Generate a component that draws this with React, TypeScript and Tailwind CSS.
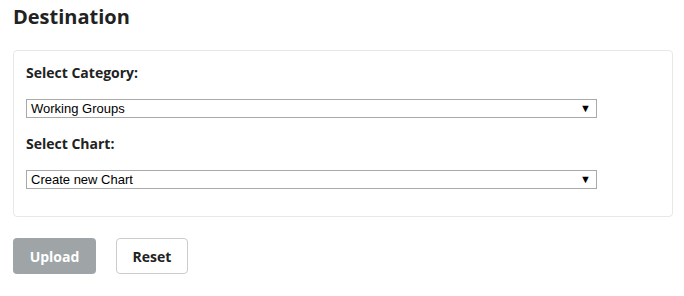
import React from "react";

function FakeSelect({ value }: { value: string }) {
  return (
    <div className="flex h-[19px] w-[571px] items-center justify-between border border-[#a9a9a9] bg-white pl-[4px] pr-[5px] font-['Liberation_Sans',Arial,sans-serif] text-[13px] text-black">
      <span className="leading-[17px]">{value}</span>
      <span className="text-[11px] leading-none">▼</span>
    </div>
  );
}

export default function App() {
  return (
    <div className="min-h-[296px] bg-white px-[13px] pt-[3px] font-['Open_Sans',sans-serif] text-[#222]">
      <h2 className="text-[20px] font-bold leading-[28px] text-[#222]">Destination</h2>
      <div className="mt-[19px] w-[660px] rounded-[4px] border border-[#e8e8e8] px-[12px] pb-[27px] pt-[12px]">
        <div className="text-[14px] font-bold leading-[20px] text-[#222]">Select Category:</div>
        <div className="mt-[16px]">
          <FakeSelect value="Working Groups" />
        </div>
        <div className="mt-[16px] text-[14px] font-bold leading-[20px] text-[#222]">Select Chart:</div>
        <div className="mt-[16px]">
          <FakeSelect value="Create new Chart" />
        </div>
      </div>
      <div className="mt-[21px] flex gap-[20px]">
        <button className="h-[36px] w-[83px] rounded-[4px] bg-[#9fa5a7] text-[14px] font-bold text-white">
          Upload
        </button>
        <button className="h-[36px] w-[72px] rounded-[4px] border border-[#cccccc] bg-white text-[14px] font-bold text-[#222]">
          Reset
        </button>
      </div>
    </div>
  );
}
